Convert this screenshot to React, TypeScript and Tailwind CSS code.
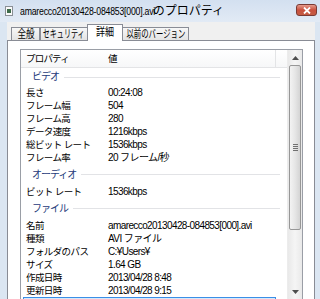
const video = [
  ['長さ', '00:24:08'],
  ['フレーム幅', '504'],
  ['フレーム高', '280'],
  ['データ速度', '1216kbps'],
  ['総ビット レート', '1536kbps'],
  ['フレーム率', '20 フレーム/秒'],
];

const audio = [['ビット レート', '1536kbps']];

const file = [
  ['名前', 'amarecco20130428-084853[000].avi'],
  ['種類', 'AVI ファイル'],
  ['フォルダのパス', 'C:¥Users¥'],
  ['サイズ', '1.64 GB'],
  ['作成日時', '2013/04/28 8:48'],
  ['更新日時', '2013/04/28 9:15'],
];

const tabs = [
  { label: '全般', box: 'w-[29px]', text: 'scale-x-[0.78]' },
  { label: 'セキュリティ', box: 'w-[48px]', text: 'scale-x-[0.64]' },
  { label: '詳細', box: 'w-[36px] -ml-px', text: 'scale-x-[0.82]', active: true },
  { label: '以前のバージョン', box: 'w-[67px] -ml-px', text: 'scale-x-[0.67]' },
];

function Group({ title, first }: { title: string; first?: boolean }) {
  return (
    <div className={`flex items-center pl-[11px] pr-[7px] ${first ? 'h-[18px]' : 'h-[21px]'}`}>
      <span className="text-[#1e3a7a] text-[10px] tracking-[-1px] leading-none">{title}</span>
      <div className="flex-1 ml-[5px] h-px bg-[#e2e3e6]" />
    </div>
  );
}

function Row({ label, value }: { label: string; value: string }) {
  return (
    <div className="flex items-center h-[13px] text-[10px] leading-none text-black">
      <span className="w-[87px] pl-[5px] shrink-0 text-[9.5px] tracking-[-0.6px] whitespace-nowrap">{label}</span>
      <span className="whitespace-nowrap tracking-[-0.6px]">{value}</span>
    </div>
  );
}

export default function App() {
  return (
    <div className="w-[320px] h-[299px] overflow-hidden bg-[#dbe6f2] font-['Liberation_Sans','Noto_Sans_CJK_JP',sans-serif]">
      {/* Title bar */}
      <div className="h-[22px] flex items-center pl-[5px] pr-[3px] bg-gradient-to-b from-[#d3e0f0] to-[#e2eaf5]">
        <svg width="8" height="10" viewBox="0 0 8 10" className="shrink-0">
          <rect x="0.5" y="0.5" width="7" height="9" fill="#fafafa" stroke="#8a8f96" />
          <rect x="2" y="3" width="4" height="4" fill="#3d6b4a" />
        </svg>
        <span className="ml-[7px] text-[12px] text-black whitespace-nowrap">
          <span className="inline-block origin-left scale-x-[0.76] -mr-[45px] text-[11.5px] tracking-[-0.3px]">
            amarecco20130428-084853[000].avi
          </span>
          <span className="font-['Noto_Sans_CJK_JP',sans-serif]">のプロパティ</span>
        </span>
        <div className="flex-1" />
        <div className="w-[21px] h-[12px] mb-[2px] rounded-[3px] border border-[#7a3a34] bg-gradient-to-b from-[#e49a8c] via-[#c9503e] to-[#c45c44] flex items-center justify-center">
          <svg width="8" height="7" viewBox="0 0 8 7">
            <path d="M1 0.5 L7 6.5 M7 0.5 L1 6.5" stroke="white" strokeWidth="1.8" />
          </svg>
        </div>
      </div>

      {/* Client area */}
      <div className="ml-[7px] w-[308px] bg-[#f0f0f0]">
        <div className="flex items-end h-[18px] pl-[4px]">
          {tabs.map((t) => (
            <div
              key={t.label}
              className={`${t.box} flex justify-center border border-b-0 border-[#898c95] text-[11px] ${
                t.active
                  ? 'h-[17px] -mb-px bg-white z-10 items-start pt-[2px]'
                  : 'h-[13px] bg-gradient-to-b from-[#f7f7f7] to-[#e3e3e3] items-center'
              }`}
            >
              <span className={`inline-block whitespace-nowrap leading-none ${t.text}`}>{t.label}</span>
            </div>
          ))}
        </div>

        <div className="h-[259px] border border-b-0 border-[#898c95] bg-white pt-[8px] pl-[12px]">
          {/* List view */}
          <div className="w-[283px] h-[251px] border border-[#9a9ea6] flex">
            <div className="w-[266px] overflow-hidden">
              <div className="h-[18px] flex items-center border-b border-[#e3e4e6] bg-gradient-to-b from-white to-[#f6f7f8] text-[9.5px] leading-none">
                <span className="w-[87px] pl-[5px] tracking-[-0.8px]">プロパティ</span>
                <span className="w-[167px]">値</span>
                <div className="w-px h-full bg-[#e3e4e6]" />
              </div>
              <Group title="ビデオ" first />
              {video.map(([l, v]) => (
                <Row key={l} label={l} value={v} />
              ))}
              <Group title="オーディオ" />
              {audio.map(([l, v]) => (
                <Row key={l} label={l} value={v} />
              ))}
              <Group title="ファイル" />
              {file.map(([l, v]) => (
                <Row key={l} label={l} value={v} />
              ))}
              <div className="ml-[2px] mr-[11px] h-[13px] border border-[#3a8ee6] bg-[#d5e8fb]" />
            </div>

            {/* Scrollbar */}
            <div className="w-[15px] flex flex-col bg-gradient-to-r from-[#e9e9e9] via-[#f5f5f5] to-[#e9e9e9] border-l border-[#ececec]">
              <div className="h-[15px] flex items-center justify-center">
                <svg width="7" height="4" viewBox="0 0 7 4">
                  <path d="M0 4 L3.5 0 L7 4 Z" fill="#4d4d4d" />
                </svg>
              </div>
              <div className="h-[165px] mx-px rounded-[2px] border border-[#979797] bg-gradient-to-r from-[#f3f3f3] via-[#e6e6e6] to-[#d4d4d4] flex flex-col items-center justify-center gap-[1px]">
                <div className="w-[5px] h-px bg-[#707070]" />
                <div className="w-[5px] h-px bg-[#707070]" />
                <div className="w-[5px] h-px bg-[#707070]" />
                <div className="w-[5px] h-px bg-[#707070]" />
              </div>
              <div className="flex-1" />
              <div className="h-[15px] flex items-center justify-center">
                <svg width="7" height="4" viewBox="0 0 7 4">
                  <path d="M0 0 L3.5 4 L7 0 Z" fill="#4d4d4d" />
                </svg>
              </div>
            </div>
          </div>
        </div>
      </div>
    </div>
  );
}
